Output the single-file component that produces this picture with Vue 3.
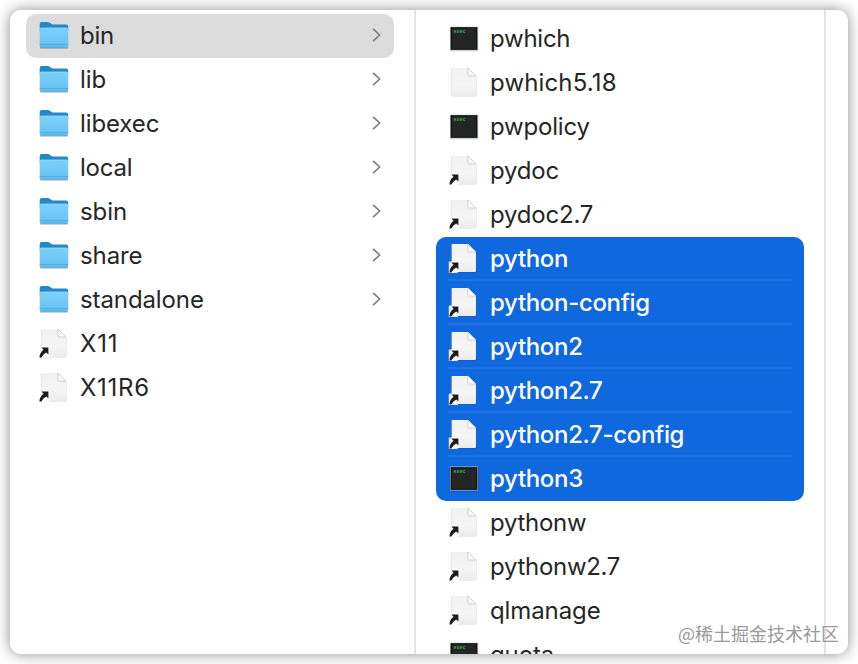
<template>
  <main class="window">
    <section v-for="(column, i) in columns" :key="i" class="column" :class="`column--${i}`">
      <ul class="list">
        <li
          v-for="item in column"
          :key="item.name"
          class="item"
          :class="{ 'item--active': item.active, 'item--selected': item.selected }"
        >
          <svg v-if="item.type === 'folder'" class="icon" viewBox="0 0 32 32" aria-hidden="true">
            <rect x="2" y="27.4" width="28" height="2.4" rx="1" fill="#000" opacity=".25" />
            <path d="M1.7 5q0-2 2-2h6.1q1.2 0 2 .7l1.8 1.3q.6.5 1.6.5h13q2 0 2 2V12H1.7z" fill="#2388c8" />
            <path d="M1.7 10.3q0-1.5 1.5-1.5h25.6q1.5 0 1.5 1.5v16.4q0 1.8-1.8 1.8h-25q-1.8 0-1.8-1.8z" fill="url(#folder)" />
            <path d="M2.5 9.2h27" stroke="#91daff" stroke-width=".8" />
            <path d="M1.7 25.6h28.6" stroke="#4bacdf" stroke-width="1" />
            <path d="M2.4 28.2h27.2" stroke="#4aa5d3" stroke-width=".8" />
          </svg>
          <svg v-else-if="item.type === 'exec'" class="icon" viewBox="0 0 32 32" aria-hidden="true">
            <rect x="1.8" y="5.2" width="28.6" height="24.2" rx="1" fill="#000" opacity=".16" />
            <rect x="2" y="4.6" width="28" height="24" rx=".6" :fill="item.selected ? '#b7bdc5' : '#cfd4d4'" />
            <rect x="2.6" y="5.2" width="26.8" height="22.6" fill="#050706" />
            <rect x="3.6" y="6.2" width="24.8" height="20.6" fill="#242625" />
            <text x="5.6" y="11.4" class="icon__exec">exec</text>
          </svg>
          <svg v-else class="icon" viewBox="0 0 32 32" aria-hidden="true">
            <path d="M4 2.4h16.9l7.6 8v19.1q0 1-1 1h-23.3q-1.2 0-1.2-1.2V3.6q0-1.2 1-1.2z" fill="#000" opacity=".14" />
            <path d="M4.4 2h15.8l7.8 8v18.8q0 1.2-1.2 1.2H4.8q-1.2 0-1.2-1.2V3.2Q3.6 2 4.4 2z" fill="url(#page)" />
            <path d="M19.8 2v6.7q0 1.3 1.3 1.3H28z" fill="#fafafa" stroke="#c3c3c3" stroke-width=".7" />
            <g v-if="item.type === 'alias'">
              <path d="M.8 31V20.6q0-1.2 1.2-1.2h9.2v10.2L9 31z" fill="#fff" opacity=".9" />
              <path d="M3.4 20.6h7v7L8.3 25.5q-3.2 1.4-4.9 5H1.4q.2-4.8 4.2-7.7z" fill="#1b1b1b" />
            </g>
          </svg>

          <span class="item__name" :style="item.tracking && { letterSpacing: `${item.tracking}px` }">{{ item.name }}</span>

          <svg v-if="item.type === 'folder'" class="chevron" viewBox="0 0 10 16" aria-hidden="true">
            <path d="M1.6 2.3 7.7 8l-6.1 5.7" />
          </svg>
        </li>
      </ul>
    </section>
    <span class="watermark">@稀土掘金技术社区</span>

    <svg class="defs" aria-hidden="true">
      <defs>
        <linearGradient id="folder" x1="0" y1="0" x2="0" y2="1">
          <stop offset="0" stop-color="#7ed0fb" />
          <stop offset="1" stop-color="#65c1f3" />
        </linearGradient>
        <linearGradient id="page" x1="0" y1="0" x2="0" y2="1">
          <stop offset="0" stop-color="#f1f1f1" />
          <stop offset=".6" stop-color="#f5f5f5" />
          <stop offset="1" stop-color="#ececec" />
        </linearGradient>
      </defs>
    </svg>
  </main>
</template>

<script setup>
const columns = [
  [
    { name: 'bin', type: 'folder', active: true, tracking: -0.3 },
    { name: 'lib', type: 'folder' },
    { name: 'libexec', type: 'folder' },
    { name: 'local', type: 'folder', tracking: -0.2 },
    { name: 'sbin', type: 'folder' },
    { name: 'share', type: 'folder' },
    { name: 'standalone', type: 'folder' },
    { name: 'X11', type: 'alias', tracking: 0.8 },
    { name: 'X11R6', type: 'alias', tracking: 0.7 }
  ],
  [
    { name: 'pwhich', type: 'exec', tracking: -0.25 },
    { name: 'pwhich5.18', type: 'file', tracking: 0.15 },
    { name: 'pwpolicy', type: 'exec', tracking: -0.2 },
    { name: 'pydoc', type: 'alias', tracking: -0.2 },
    { name: 'pydoc2.7', type: 'alias', tracking: -0.2 },
    { name: 'python', type: 'alias', selected: true },
    { name: 'python-config', type: 'alias', selected: true },
    { name: 'python2', type: 'alias', selected: true },
    { name: 'python2.7', type: 'alias', selected: true },
    { name: 'python2.7-config', type: 'alias', selected: true },
    { name: 'python3', type: 'exec', selected: true },
    { name: 'pythonw', type: 'alias', tracking: -0.3 },
    { name: 'pythonw2.7', type: 'alias', tracking: -0.3 },
    { name: 'qlmanage', type: 'alias' },
    { name: 'quota', type: 'exec' }
  ]
]
</script>

<style>
body { background: #fff; overflow: hidden; }
#app { display: flow-root; }
</style>

<style scoped>
.window {
  position: relative; display: flex; box-sizing: border-box;
  width: 838px; height: 644px; margin: 10px; overflow: hidden;
  background: #fff; border-radius: 11px;
  box-shadow: 0 0 14px rgba(0, 0, 0, .46);
  font-family: Inter, "Noto Sans CJK SC", sans-serif;
}
.column { box-sizing: border-box; flex: none; border-right: 2px solid #e3e3e3; }
.column--0 { width: 406px; padding: 4px 20px 0 16px; }
.column--1 { width: 410px; padding: 7px 20px 0; }

.list { list-style: none; margin: 0; padding: 0; }
.item {
  display: flex; align-items: center; box-sizing: border-box; height: 44px;
  padding: 0 12px; color: #262626; border-radius: 10px;
}
.item--active { background: #dcdcdc; }
.item--selected { background: #1068de; color: #fff; border-radius: 0; }
.item--selected:has(+ .item--selected) {
  background: linear-gradient(#2272e5, #2272e5) 12px 100% / calc(100% - 24px) 2px no-repeat #1068de;
}
.item:not(.item--selected) + .item--selected { border-radius: 10px 10px 0 0; }
.item--selected:has(+ .item:not(.item--selected)) { border-radius: 0 0 10px 10px; }

.icon { flex: none; width: 32px; height: 32px; margin: 0 10px 2px 0; }
.icon__exec { font: bold 5px "Liberation Mono", monospace; fill: #39ac5c; }
.item__name { flex: 1; font-size: 24px; line-height: 44px; letter-spacing: -.1px; white-space: nowrap; }
.item--selected .item__name { font-weight: 500; letter-spacing: -.33px; }
.chevron {
  width: 10px; height: 16px; margin-bottom: 2px; fill: none; stroke: #7d7d7d; stroke-width: 1.7;
  stroke-linecap: round; stroke-linejoin: round;
}

.watermark {
  position: absolute; right: 9px; bottom: 8px;
  font: 18px/26px "Noto Sans CJK SC", sans-serif; color: #999;
}
.defs { position: absolute; width: 0; height: 0; }
</style>
